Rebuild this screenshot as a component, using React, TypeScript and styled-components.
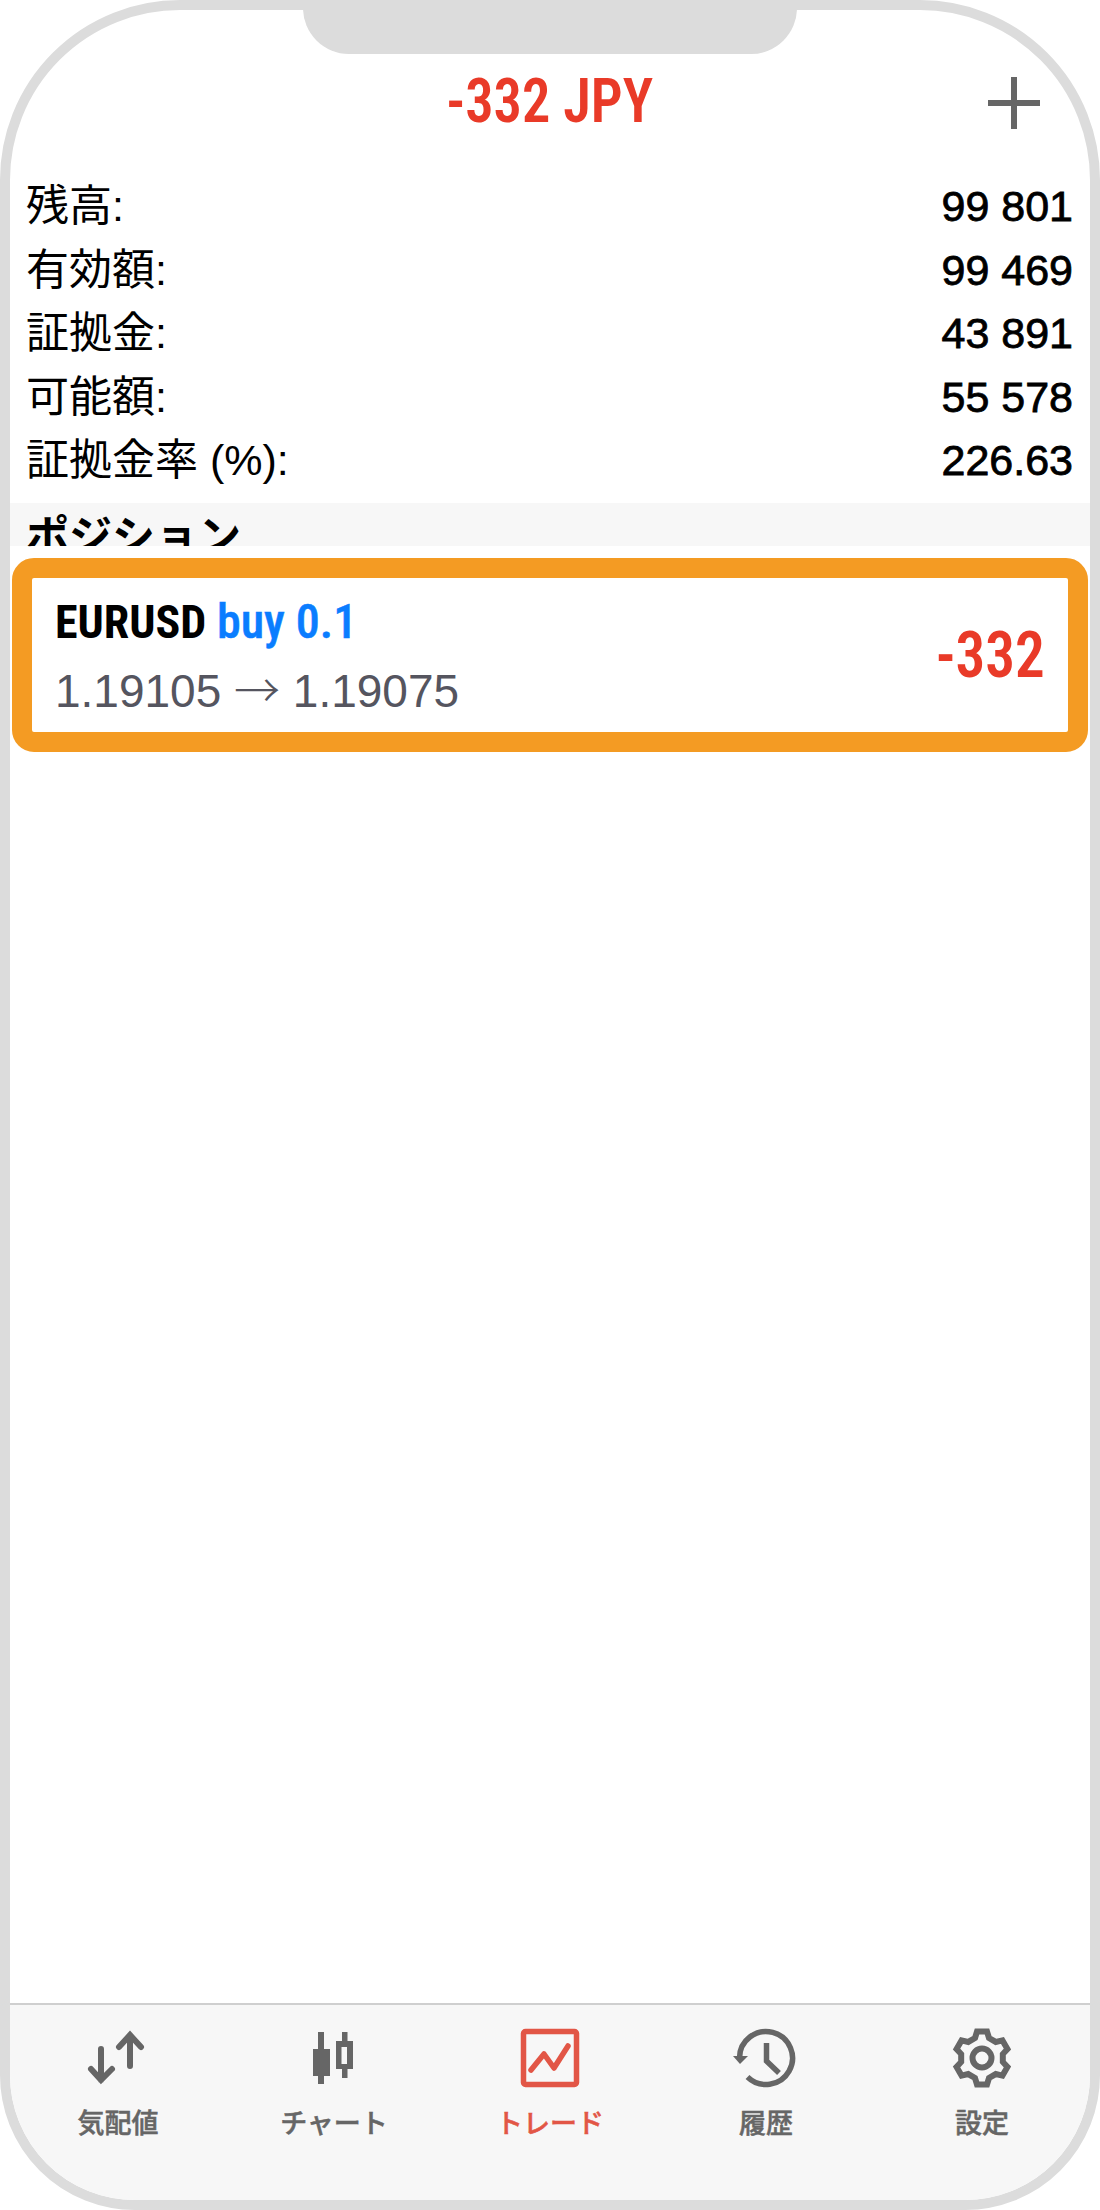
import React from "react";
import styled, { createGlobalStyle } from "styled-components";

const Global = createGlobalStyle`
  html, body { margin: 0; padding: 0; background: #fff; }
  #root { width: 1100px; height: 2210px; }
`;

const sans = `"Liberation Sans", "Noto Sans CJK JP", sans-serif`;
const narrow = `"Liberation Sans Narrow", "Roboto Condensed", "Liberation Sans", sans-serif`;
const red = "#e93a28";

const Phone = styled.div`
  position: relative;
  box-sizing: border-box;
  width: 1100px;
  height: 2210px;
  border: 10px solid #dcdcdc;
  border-radius: 180px 180px 135px 135px;
  background: #fff;
  display: flex;
  flex-direction: column;
  overflow: hidden;
  font-family: ${sans};
`;

const Notch = styled.div`
  position: absolute;
  top: -10px;
  left: 293px;
  width: 494px;
  height: 54px;
  background: #dcdcdc;
  border-radius: 0 0 46px 46px;
`;

const Header = styled.header`
  height: 165px;
  flex: none;
  box-sizing: border-box;
  padding-top: 56px;
  display: flex;
  justify-content: center;
  align-items: flex-start;
  position: relative;
`;

const Title = styled.div`
  font-family: ${narrow};
  font-weight: 600;
  font-size: 62px;
  line-height: 70px;
  color: ${red};
  transform: scaleX(0.91);
`;

const PlusIcon = styled.svg`
  position: absolute;
  left: 978px;
  top: 67px;
  width: 52px;
  height: 52px;
`;

const Summary = styled.section`
  flex: none;
  height: 328px;
  padding: 0 17px 0 16px;
  display: flex;
  flex-direction: column;
`;

const Row = styled.div`
  height: 63.6px;
  flex: none;
  display: flex;
  justify-content: space-between;
  align-items: baseline;
  font-size: 43px;
  line-height: 63.6px;
  color: #000;
`;

const Amount = styled.span`
  font-size: 43px;
  -webkit-text-stroke: 0.8px #000;
`;

const Section = styled.div`
  flex: none;
  height: 43px;
  box-sizing: border-box;
  background: #f7f7f7;
  padding: 9px 16px 0;
  font-size: 43px;
  font-weight: 700;
  line-height: 50px;
  color: #000;
`;

const Body = styled.main`
  flex: 1;
`;

const Halo = styled.div`
  position: absolute;
  left: -10px;
  right: -10px;
  top: 536px;
  padding: 12px;
  background: #fff;
  border-radius: 32px;
`;

const Card = styled.div`
  box-sizing: border-box;
  height: 194px;
  border: 20px solid #f49b23;
  border-radius: 22px;
  padding: 0 23px;
  display: flex;
  justify-content: space-between;
  align-items: center;
`;

const Details = styled.div`
  display: flex;
  flex-direction: column;
  padding-top: 6px;
`;

const Symbol = styled.div`
  font-family: ${narrow};
  font-weight: 700;
  font-size: 46px;
  line-height: 62px;
  color: #000;
`;

const Side = styled.span`
  color: #0a7dff;
  font-size: 48px;
  font-weight: 500;
  -webkit-text-stroke: 0.5px #0a7dff;
`;

const Prices = styled.div`
  font-size: 46px;
  line-height: 68px;
  color: #55555f;
`;

const Arrow = styled.span`
  font-family: "Noto Sans CJK JP", sans-serif;
  font-weight: 300;
`;

const Profit = styled.div`
  font-family: ${narrow};
  font-weight: 600;
  font-size: 65px;
  color: ${red};
  transform: scaleX(0.91);
  transform-origin: right center;
`;

const TabBar = styled.nav`
  flex: none;
  height: 197px;
  box-sizing: border-box;
  border-top: 2px solid #cfcfcf;
  background: #f7f7f7;
  display: grid;
  grid-template-columns: repeat(5, 1fr);
  padding-top: 23px;
`;

const Tab = styled.div<{ $active?: boolean }>`
  display: flex;
  flex-direction: column;
  align-items: center;
  color: ${(p) => (p.$active ? "#e25646" : "#666")};
`;

const TabIcon = styled.svg`
  width: 60px;
  height: 60px;
  display: block;
  overflow: visible;
`;

const TabLabel = styled.span`
  margin-top: 21px;
  font-size: 27px;
  line-height: 30px;
  font-weight: 500;
  -webkit-text-stroke: 0.5px currentColor;
`;

const rows: [string, string][] = [
  ["残高:", "99 801"],
  ["有効額:", "99 469"],
  ["証拠金:", "43 891"],
  ["可能額:", "55 578"],
  ["証拠金率 (%):", "226.63"],
];

const gearPath = (): string => {
  const pts: string[] = [];
  for (let k = 0; k < 6; k++) {
    const a = ((-90 + 60 * k) * Math.PI) / 180;
    const ux = Math.cos(a);
    const uy = Math.sin(a);
    const vx = -uy;
    const vy = ux;
    const p = (r: number, w: number) => `${(30 + ux * r + vx * w).toFixed(2)} ${(30 + uy * r + vy * w).toFixed(2)}`;
    pts.push(p(20, -7), p(26.5, -5), p(26.5, 5), p(20, 7));
  }
  return `M${pts.join("L")}Z`;
};

const QuotesIcon = () => (
  <TabIcon viewBox="0 0 60 60" fill="none" stroke="currentColor" strokeWidth="6" strokeLinecap="round" strokeLinejoin="miter">
    <path d="M13 21V52M3 41L13 52L24 41" />
    <path d="M42 38V7M31 19L42 7L53 19" />
  </TabIcon>
);

const CandleIcon = () => (
  <TabIcon viewBox="0 0 60 60" fill="currentColor">
    <rect x="14" y="4" width="6" height="52" />
    <rect x="9" y="21" width="17" height="27" />
    <path fillRule="evenodd" d="M38 4h5.500v9H49v28h-5.500v9H38v-9h-6V13h6zM37.500 19v17h5.500V19z" />
  </TabIcon>
);

const TradeIcon = () => (
  <TabIcon viewBox="0 0 60 60" fill="none" stroke="currentColor" strokeWidth="5.5" strokeLinecap="round" strokeLinejoin="round">
    <rect x="3.500" y="3.500" width="53" height="53" rx="2" strokeLinejoin="miter" />
    <path d="M11 42L24 26L34 40L48 18" />
  </TabIcon>
);

const HistoryIcon = () => (
  <TabIcon viewBox="0 0 60 60" fill="none" stroke="currentColor" strokeWidth="5.5">
    <path d="M3.500 30A26.500 26.500 0 1 1 11.500 49" />
    <path d="M-3 28H12L4 36Z" fill="currentColor" stroke="none" />
    <path d="M30.500 15V33L43 45" />
  </TabIcon>
);

const GearIcon = () => (
  <TabIcon viewBox="0 0 60 60" fill="none" stroke="currentColor" strokeWidth="6" strokeLinejoin="miter">
    <path d={gearPath()} />
    <circle cx="30" cy="30" r="9.500" />
  </TabIcon>
);

export default function App() {
  return (
    <>
      <Global />
      <Phone>
        <Notch />
        <Header>
          <Title>-332 JPY</Title>
          <PlusIcon viewBox="0 0 52 52">
            <path d="M26 0V52M0 26H52" stroke="#666" strokeWidth="6" />
          </PlusIcon>
        </Header>
        <Summary>
          {rows.map(([k, v]) => (
            <Row key={k}>
              <span>{k}</span>
              <Amount>{v}</Amount>
            </Row>
          ))}
        </Summary>
        <Section>ポジション</Section>
        <Body />
        <Halo>
          <Card>
            <Details>
              <Symbol>
                EURUSD <Side>buy 0.1</Side>
              </Symbol>
              <Prices>
                1.19105 <Arrow>→</Arrow> 1.19075
              </Prices>
            </Details>
            <Profit>-332</Profit>
          </Card>
        </Halo>
        <TabBar>
          <Tab><QuotesIcon /><TabLabel>気配値</TabLabel></Tab>
          <Tab><CandleIcon /><TabLabel>チャート</TabLabel></Tab>
          <Tab $active><TradeIcon /><TabLabel>トレード</TabLabel></Tab>
          <Tab><HistoryIcon /><TabLabel>履歴</TabLabel></Tab>
          <Tab><GearIcon /><TabLabel>設定</TabLabel></Tab>
        </TabBar>
      </Phone>
    </>
  );
}
